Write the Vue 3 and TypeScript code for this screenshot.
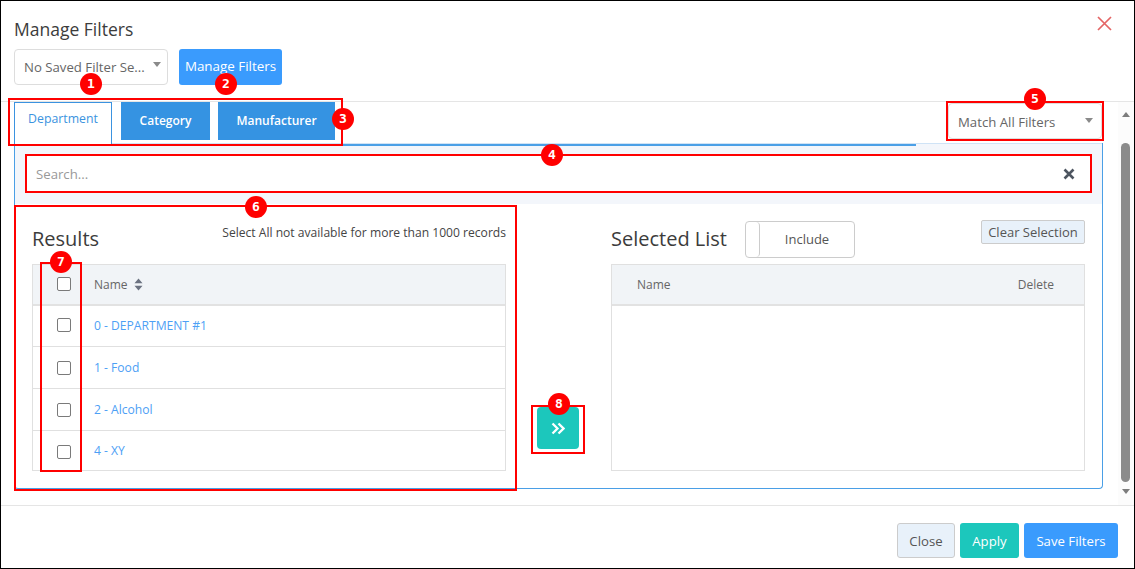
<script setup lang="ts">
const rows: string[] = ['0 - DEPARTMENT #1', '1 - Food', '2 - Alcohol', '4 - XY']
const tabs: string[] = ['Category', 'Manufacturer']
interface Mark { n: number; x: number; y: number }
const marks: Mark[] = [
  { n: 1, x: 91, y: 83 },
  { n: 2, x: 226, y: 83 },
  { n: 3, x: 343, y: 118 },
  { n: 4, x: 552, y: 154 },
  { n: 5, x: 1035, y: 98 },
  { n: 6, x: 256, y: 206 },
  { n: 7, x: 61, y: 261 },
  { n: 8, x: 559, y: 403 },
]
interface Box { x: number; y: number; w: number; h: number }
const boxes: Box[] = [
  { x: 8, y: 98, w: 335, h: 48 },
  { x: 25, y: 154, w: 1067, h: 39 },
  { x: 946, y: 101, w: 158, h: 40 },
  { x: 14, y: 205, w: 503, h: 286 },
  { x: 40, y: 262, w: 42, h: 210 },
  { x: 531, y: 405, w: 54, h: 49 },
]
</script>

<template>
  <div class="frame">
    <header class="head">
      <div class="title-row">
        <h1 class="title">Manage Filters</h1>
        <svg class="close-x" width="15" height="15" viewBox="0 0 15 15">
          <path d="M1 1L14 14M14 1L1 14" stroke="#e46565" stroke-width="1.7" fill="none" />
        </svg>
      </div>
      <div class="saved-row">
        <div class="select saved"><span>No Saved Filter Se...</span><i class="caret"></i></div>
        <button class="btn blue manage">Manage Filters</button>
      </div>
    </header>

    <div class="middle">
      <main class="content">
        <div class="tabs-row">
          <div class="tab active">Department</div>
          <div v-for="t in tabs" :key="t" class="tab solid">{{ t }}</div>
          <div class="select match"><span>Match All Filters</span><i class="caret"></i></div>
        </div>
        <section class="panel">
          <div class="search-band">
            <div class="search">
              <span class="placeholder">Search...</span>
              <svg width="12" height="12" viewBox="0 0 12 12">
                <path d="M1.5 1.5L10.5 10.5M10.5 1.5L1.5 10.5" stroke="#4d5560" stroke-width="2.6" fill="none" />
              </svg>
            </div>
          </div>
          <div class="columns">
            <div class="col">
              <div class="col-head">
                <h2 class="col-title">Results</h2>
                <span class="hint">Select All not available for more than 1000 records</span>
              </div>
              <div class="table">
                <div class="thead">
                  <span class="cb-cell"><i class="cb"></i></span>
                  <span class="th">Name</span>
                  <svg class="sort" width="9" height="13" viewBox="0 0 9 13">
                    <path d="M4.5 0.5L8.5 5.3H0.5ZM4.5 12.5L0.5 7.7H8.5Z" fill="#6b7280" />
                  </svg>
                </div>
                <div v-for="r in rows" :key="r" class="tr">
                  <span class="cb-cell"><i class="cb"></i></span>
                  <a class="link">{{ r }}</a>
                </div>
              </div>
            </div>
            <div class="mover">
              <button class="move">
                <svg width="14" height="13" viewBox="0 0 14 13">
                  <path d="M1.5 1.5L6.5 6.5L1.5 11.5M7.5 1.5L12.5 6.5L7.5 11.5" stroke="#fff" stroke-width="2.3" fill="none" />
                </svg>
              </button>
            </div>
            <div class="col">
              <div class="col-head right">
                <h2 class="col-title">Selected List</h2>
                <div class="toggle"><i class="knob"></i><span class="toggle-text">Include</span></div>
                <button class="clear">Clear Selection</button>
              </div>
              <div class="table second">
                <div class="thead plain">
                  <span class="th">Name</span>
                  <span class="th">Delete</span>
                </div>
              </div>
            </div>
          </div>
        </section>
      </main>
      <aside class="scroll">
        <i class="arrow up"></i>
        <i class="thumb"></i>
        <i class="arrow down"></i>
      </aside>
    </div>

    <footer class="foot">
      <button class="btn close">Close</button>
      <button class="btn teal">Apply</button>
      <button class="btn blue save">Save Filters</button>
    </footer>

    <i
      v-for="(b, i) in boxes"
      :key="i"
      class="redbox"
      :style="{ left: b.x + 'px', top: b.y + 'px', width: b.w + 'px', height: b.h + 'px' }"
    ></i>
    <b
      v-for="m in marks"
      :key="m.n"
      class="badge"
      :style="{ left: m.x - 11 + 'px', top: m.y - 11 + 'px' }"
    >{{ m.n }}</b>
  </div>
</template>

<style>
html, body { margin: 0; background: #fff; }
</style>

<style scoped>
.frame {
  position: relative;
  box-sizing: border-box;
  width: 1135px;
  height: 569px;
  border: 1px solid #000;
  background: #fff;
  font-family: "Open Sans", sans-serif;
  color: #555;
  display: flex;
  flex-direction: column;
  overflow: hidden;
}
button { font-family: inherit; cursor: pointer; }
.head {
  box-sizing: border-box;
  height: 101px;
  padding: 0 0 0 13px;
  border-bottom: 1px solid #e5e5e5;
  flex: none;
}
.title-row {
  height: 48px;
  display: flex;
  justify-content: space-between;
  padding-right: 22px;
}
.title {
  margin: 18px 0 0;
  font-size: 17.5px;
  line-height: 21px;
  font-weight: 400;
  color: #3c3c3c;
}
.close-x { margin-top: 15px; }
.saved-row { display: flex; gap: 11px; }
.select {
  box-sizing: border-box;
  display: flex;
  align-items: center;
  justify-content: space-between;
  border: 1px solid #ddd;
  border-radius: 4px;
  background: #fff;
  font-size: 13.2px;
  color: #666;
  height: 36px;
}
.saved { width: 154px; padding: 0 6px 1px 9px; }
.caret {
  width: 0;
  height: 0;
  margin-top: -4px;
  border-left: 4.5px solid transparent;
  border-right: 4.5px solid transparent;
  border-top: 5.5px solid #8a8a8a;
}
.btn {
  box-sizing: border-box;
  height: 35px;
  border: 0;
  border-radius: 3px;
  color: #fff;
  font-size: 13.2px;
  padding: 0;
}
.blue { background: #3a9bfd; }
.teal { background: #1cc7bc; width: 59px; font-weight: 500; }
.manage { width: 103px; height: 36px; font-size: 13.4px; padding-bottom: 2px; }
.middle { flex: 1; display: flex; min-height: 0; }
.content { flex: 1; min-width: 0; padding-left: 13px; }
.tabs-row { display: flex; height: 41px; align-items: flex-start; }
.tab {
  box-sizing: border-box;
  font-size: 12px;
  display: flex;
  align-items: center;
  justify-content: center;
}
.active {
  width: 98px;
  height: 42px;
  padding-bottom: 11px;
  margin-right: 9px;
  border: 1px solid #3b93e0;
  border-bottom: 0;
  color: #3b93e0;
  font-size: 12.3px;
  font-weight: 500;
  background: #fff;
  position: relative;
  z-index: 1;
}
.solid {
  height: 38px;
  margin-right: 8px;
  padding-bottom: 2px;
  background: #3593e2;
  color: #fff;
  font-weight: 600;
}
.solid:nth-child(2) { width: 89px; }
.solid:nth-child(3) { width: 117px; margin-right: 0; }
.match {
  width: 154px;
  margin: 1px 16px 0 auto;
  padding: 2px 8px 0 9px;
}
.panel {
  box-sizing: border-box;
  width: 1089px;
  height: 346px;
  border: 1px solid #4a9fe6;
  border-top: 0;
  border-radius: 0 0 4px 4px;
  position: relative;
  background: #fff;
}
.search-band {
  box-sizing: border-box;
  height: 61px;
  background: #f3f6fb;
  border-top: 1px solid #cfe3f6;
  padding: 12px;
  background-image: linear-gradient(#4a9fe6, #4a9fe6);
  background-repeat: no-repeat;
  background-size: 901px 2px;
}
.search {
  box-sizing: border-box;
  height: 36px;
  background: #fff;
  border-radius: 2px;
  display: flex;
  align-items: center;
  justify-content: space-between;
  padding: 0 15px 0 9px;
}
.placeholder { font-size: 13.2px; color: #999; }
.columns { display: flex; padding: 0 17px; }
.col { width: 474px; }
.col-head {
  position: relative;
  display: flex;
  justify-content: space-between;
  height: 60px;
}
.col-head.right { justify-content: flex-start; gap: 18px; }
.col-title {
  margin: 22px 0 0;
  font-size: 20px;
  line-height: 26px;
  font-weight: 400;
  color: #3c3c3c;
}
.hint { font-size: 12.1px; line-height: 16px; margin-top: 21px; color: #444; }
.toggle {
  box-sizing: border-box;
  display: flex;
  width: 110px;
  height: 37px;
  margin-top: 17px;
  border: 1px solid #ccc;
  border-radius: 4px;
}
.knob {
  width: 13px;
  border-right: 1px solid #ccc;
  border-radius: 4px;
}
.toggle-text { flex: 1; text-align: center; font-size: 13px; line-height: 35px; color: #555; }
.clear {
  position: absolute;
  top: 16px;
  right: 0;
  box-sizing: border-box;
  width: 104px;
  height: 24px;
  padding: 0;
  border: 1px solid #ccc;
  border-radius: 2px;
  background: #e8f1fa;
  color: #555;
  font-size: 13px;
}
.table {
  box-sizing: border-box;
  height: 207px;
  border: 1px solid #e0e0e0;
}
.thead {
  box-sizing: border-box;
  height: 41px;
  padding-bottom: 1px;
  display: flex;
  align-items: center;
  background: #f1f4f7;
  border-bottom: 2px solid #e2e2e2;
}
.thead .cb-cell { padding-bottom: 1px; }
.thead.plain { justify-content: space-between; padding: 0 30px 1px 25px; }
.th { font-size: 12px; color: #666; }
.sort { margin-left: 6px; }
.tr {
  box-sizing: border-box;
  height: 42px;
  display: flex;
  align-items: center;
  border-bottom: 1px solid #e0e0e0;
}
.thead + .tr { height: 41px; padding-bottom: 2px; }
.tr:last-child { border-bottom: 0; height: 41px; }
.tr:last-child .link { margin-top: -2px; }
.cb-cell { box-sizing: border-box; width: 61px; padding-left: 24px; flex: none; display: flex; }
.cb {
  box-sizing: border-box;
  width: 14px;
  height: 14px;
  border: 1px solid #7a7a7a;
  border-radius: 2px;
  background: #fff;
}
.link { font-size: 12.1px; color: #4da0f5; }
.mover {
  width: 105px;
  flex: none;
  position: relative;
}
.move {
  position: absolute;
  left: 31px;
  top: 203px;
  width: 42px;
  height: 42px;
  border: 0;
  border-radius: 4px;
  background: #1cc7bc;
  display: flex;
  align-items: center;
  justify-content: center;
  padding: 0;
}
.scroll {
  width: 16px;
  flex: none;
  background: #fcfcfc;
  position: relative;
}
.thumb {
  position: absolute;
  top: 41px;
  left: 3px;
  width: 9px;
  height: 339px;
  border-radius: 5px;
  background: #8b8b8b;
}
.arrow {
  position: absolute;
  left: 4px;
  width: 0;
  height: 0;
  border-left: 4px solid transparent;
  border-right: 4px solid transparent;
}
.up { top: 10px; border-bottom: 5px solid #7d7d7d; }
.down { top: 387px; border-top: 5px solid #7d7d7d; }
.foot {
  box-sizing: border-box;
  flex: none;
  height: 63px;
  border-top: 1px solid #e5e5e5;
  display: flex;
  justify-content: flex-end;
  align-items: flex-start;
  gap: 5px;
  padding: 17px 16px 0 0;
}
.close {
  width: 58px;
  background: #e8f1fa;
  border: 1px solid #ccc;
  color: #555;
}
.save { width: 94px; }
.redbox {
  position: absolute;
  box-sizing: border-box;
  margin: -1px 0 0 -1px;
  border: 2px solid #f00;
  pointer-events: none;
}
.badge {
  position: absolute;
  margin-left: -1px;
  width: 22px;
  height: 22px;
  border-radius: 50%;
  background: #f00;
  color: #fff;
  font-family: "DejaVu Sans Mono", monospace;
  font-size: 13px;
  line-height: 22px;
  text-align: center;
}
</style>
